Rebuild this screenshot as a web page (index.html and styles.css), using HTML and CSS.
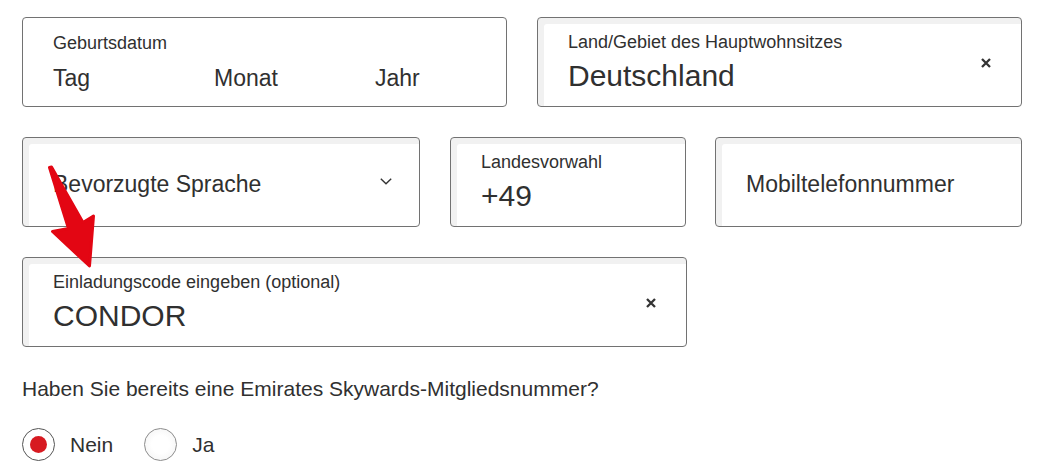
FILE: index.html
```html
<!DOCTYPE html>
<html lang="de">
<head>
<meta charset="utf-8">
<title>Registrierung</title>
<link rel="stylesheet" href="styles.css">
</head>
<body>
<div class="page">
  <div class="row">
    <div class="field field-plain w-date">
      <div class="content content-full">
        <div class="label pad">Geburtsdatum</div>
        <div class="date-parts">
          <span class="placeholder pad">Tag</span>
          <span class="placeholder pad">Monat</span>
          <span class="placeholder pad">Jahr</span>
        </div>
      </div>
    </div>
    <div class="field w-country">
      <div class="content">
        <div class="label">Land/Gebiet des Hauptwohnsitzes</div>
        <div class="value">Deutschland</div>
      </div>
      <svg class="icon-x" width="10" height="10" viewBox="0 0 10 10"><path d="M1 1 L9 9 M9 1 L1 9" stroke="#333" stroke-width="2.3" stroke-linecap="butt"/></svg>
    </div>
  </div>

  <div class="row">
    <div class="field single w-lang">
      <div class="content">
        <div class="placeholder">Bevorzugte Sprache</div>
      </div>
      <svg class="icon-chevron" width="12" height="7" viewBox="0 0 12 7"><path d="M0.8 0.8 L6 5.8 L11.2 0.8" fill="none" stroke="#333" stroke-width="1.4"/></svg>
    </div>
    <div class="field w-code">
      <div class="content">
        <div class="label">Landesvorwahl</div>
        <div class="value">+49</div>
      </div>
    </div>
    <div class="field single w-mobile">
      <div class="content">
        <div class="placeholder">Mobiltelefonnummer</div>
      </div>
    </div>
  </div>

  <div class="row">
    <div class="field w-invite">
      <div class="content">
        <div class="label">Einladungscode eingeben (optional)</div>
        <div class="value">CONDOR</div>
      </div>
      <svg class="icon-x" width="10" height="10" viewBox="0 0 10 10"><path d="M1 1 L9 9 M9 1 L1 9" stroke="#333" stroke-width="2.3" stroke-linecap="butt"/></svg>
    </div>
  </div>

  <p class="question">Haben Sie bereits eine Emirates Skywards-Mitgliedsnummer?</p>

  <div class="radios">
    <label class="radio"><span class="dot checked"></span><span class="radio-text">Nein</span></label>
    <label class="radio"><span class="dot"></span><span class="radio-text">Ja</span></label>
  </div>

  <svg class="arrow" width="120" height="290" viewBox="0 0 120 290">
    <polygon points="49.5,167.5 51.5,167 83,222.5 93.5,216 89.5,266 52.5,231.5 68.5,228.5" fill="#e30613" stroke="#e30613" stroke-width="3" stroke-linejoin="round"/>
  </svg>
</div>
</body>
</html>
```

FILE: styles.css
```css
* {
  box-sizing: border-box;
}

html, body {
  margin: 0;
  padding: 0;
  background: #ffffff;
}

body {
  font-family: "Liberation Sans", Arial, sans-serif;
  color: #303030;
}

.page {
  position: relative;
  padding: 17px 0 0 22px;
  width: 1044px;
  height: 476px;
  overflow: hidden;
}

.row {
  display: flex;
  gap: 30px;
  margin-bottom: 30px;
}

.field {
  height: 90px;
  border: 1px solid #727272;
  border-radius: 4px;
  background: #ffffff;
  box-shadow: inset 6px 6px 0 #f1f1f1;
  display: flex;
  align-items: center;
  padding: 0 30px 0 30px;
}

.field-plain {
  box-shadow: none;
  padding: 0;
}

.single {
  padding-top: 4px;
}

.w-date { width: 485px; }
.w-country { width: 485px; }
.w-lang { width: 398px; padding-right: 28px; }
.w-code { width: 236px; }
.w-mobile { width: 307px; margin-left: -1px; }
.w-invite { width: 665px; }

.content {
  display: flex;
  flex-direction: column;
  flex: 1;
}

.content-full {
  width: 100%;
}

.pad {
  padding-left: 30px;
}

.label {
  font-size: 18px;
  line-height: 20px;
}

.value {
  font-size: 30px;
  line-height: 34px;
  margin-top: 7px;
}

.placeholder {
  font-size: 23px;
  line-height: 26px;
}

.date-parts {
  display: grid;
  grid-template-columns: 1fr 1fr 1fr;
  margin-top: 12px;
}

.icon-x {
  flex: none;
  margin-top: 1px;
}

.icon-chevron {
  flex: none;
  margin-right: -1px;
  margin-top: -5px;
}

.question {
  margin: 0;
  margin-top: 2px;
  font-size: 21px;
  line-height: 24px;
}

.radios {
  display: flex;
  align-items: center;
  margin-top: 27px;
}

.radio {
  display: flex;
  align-items: center;
  font-size: 21px;
  line-height: 24px;
  margin-right: 31px;
}

.dot {
  width: 33px;
  height: 33px;
  border-radius: 50%;
  border: 1px solid #8c8c8c;
  background: radial-gradient(circle, #ffffff 40%, #f0f0f0 100%);
  display: flex;
  align-items: center;
  justify-content: center;
  flex: none;
}

.dot.checked {
  border-color: #555555;
  background: #ffffff;
}

.dot.checked::after {
  content: "";
  width: 17px;
  height: 17px;
  border-radius: 50%;
  background: #d71a21;
}

.radio-text {
  margin-left: 15px;
}

.arrow {
  position: absolute;
  left: 0;
  top: 0;
  pointer-events: none;
}
```
